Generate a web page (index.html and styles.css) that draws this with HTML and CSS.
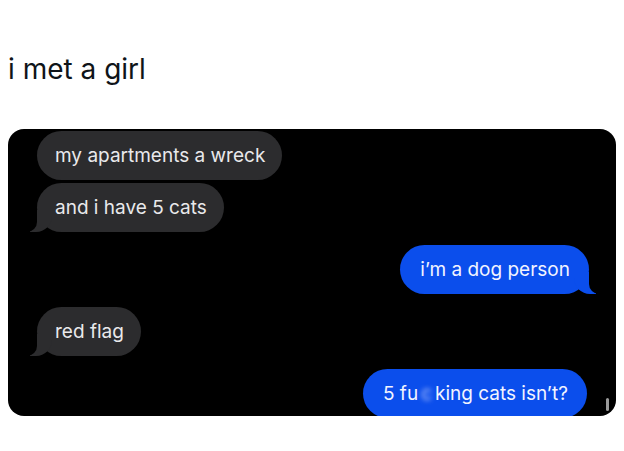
FILE: index.html
```html
<!DOCTYPE html>
<html>
<head>
<meta charset="utf-8">
<link rel="stylesheet" href="styles.css">
</head>
<body>
<div class="post">
  <h1 class="title">i met a girl</h1>
  <div class="card">
    <div class="bubble in">my apartments a wreck</div>
    <div class="bubble in tail">and i have 5 cats</div>
    <div class="bubble out tail gap">i’m a dog person</div>
    <div class="bubble in tail gap">red flag</div>
    <div class="bubble out gap wide">5 fu<span class="blur">c</span>king cats isn’t?</div>
    <div class="scroll"></div>
  </div>
</div>
</body>
</html>
```
FILE: styles.css
```css
html, body {
  margin: 0;
  padding: 0;
  background: #ffffff;
}
.post {
  padding: 0 8px;
  font-family: "Inter", "Liberation Sans", sans-serif;
}
.title {
  margin: 0;
  padding-top: 52px;
  height: 76px;
  box-sizing: border-box;
  font-size: 28px;
  font-weight: 400;
  line-height: 34px;
  color: #0f1419;
  letter-spacing: 0;
}
.card {
  position: relative;
  margin-top: 53px;
  height: 287px;
  background: #000;
  border-radius: 16px;
  overflow: hidden;
  display: flex;
  flex-direction: column;
  padding: 2px 27px 0 29px;
  box-sizing: border-box;
}
.bubble {
  position: relative;
  font-family: "Inter", "Liberation Sans", sans-serif;
  font-size: 19px;
  line-height: 49px;
  height: 49px;
  padding: 0 17px 0 18px;
  border-radius: 25px;
  color: #e9e9eb;
  margin-top: 3px;
  white-space: nowrap;
}
.bubble:first-child { margin-top: 0; }
.bubble.gap { margin-top: 13px; }
.in {
  align-self: flex-start;
  background: #2c2c2e;
}
.out {
  align-self: flex-end;
  background: #0b4eec;
  color: #f2f4ff;
  padding: 0 19px 0 20px;
}
.out.wide {
  margin-right: 2px;
}
.tail::before, .tail::after {
  content: "";
  position: absolute;
  bottom: 0;
  height: 22px;
}
.in.tail::before {
  left: -7px;
  width: 22px;
  background: #2c2c2e;
  border-bottom-right-radius: 16px;
}
.in.tail::after {
  left: -12px;
  width: 12px;
  background: #000;
  border-bottom-right-radius: 10px;
}
.out.tail::before {
  right: -7px;
  width: 22px;
  background: #0b4eec;
  border-bottom-left-radius: 16px;
}
.out.tail::after {
  right: -12px;
  width: 12px;
  background: #000;
  border-bottom-left-radius: 10px;
}
.blur {
  color: transparent;
  margin: 0 3px;
  text-shadow: 0 0 5px rgba(220, 225, 255, 0.9);
}
.scroll {
  position: absolute;
  right: 7px;
  bottom: 5px;
  width: 3px;
  height: 13px;
  border-radius: 2px;
  background: #9a9a9a;
}
```
